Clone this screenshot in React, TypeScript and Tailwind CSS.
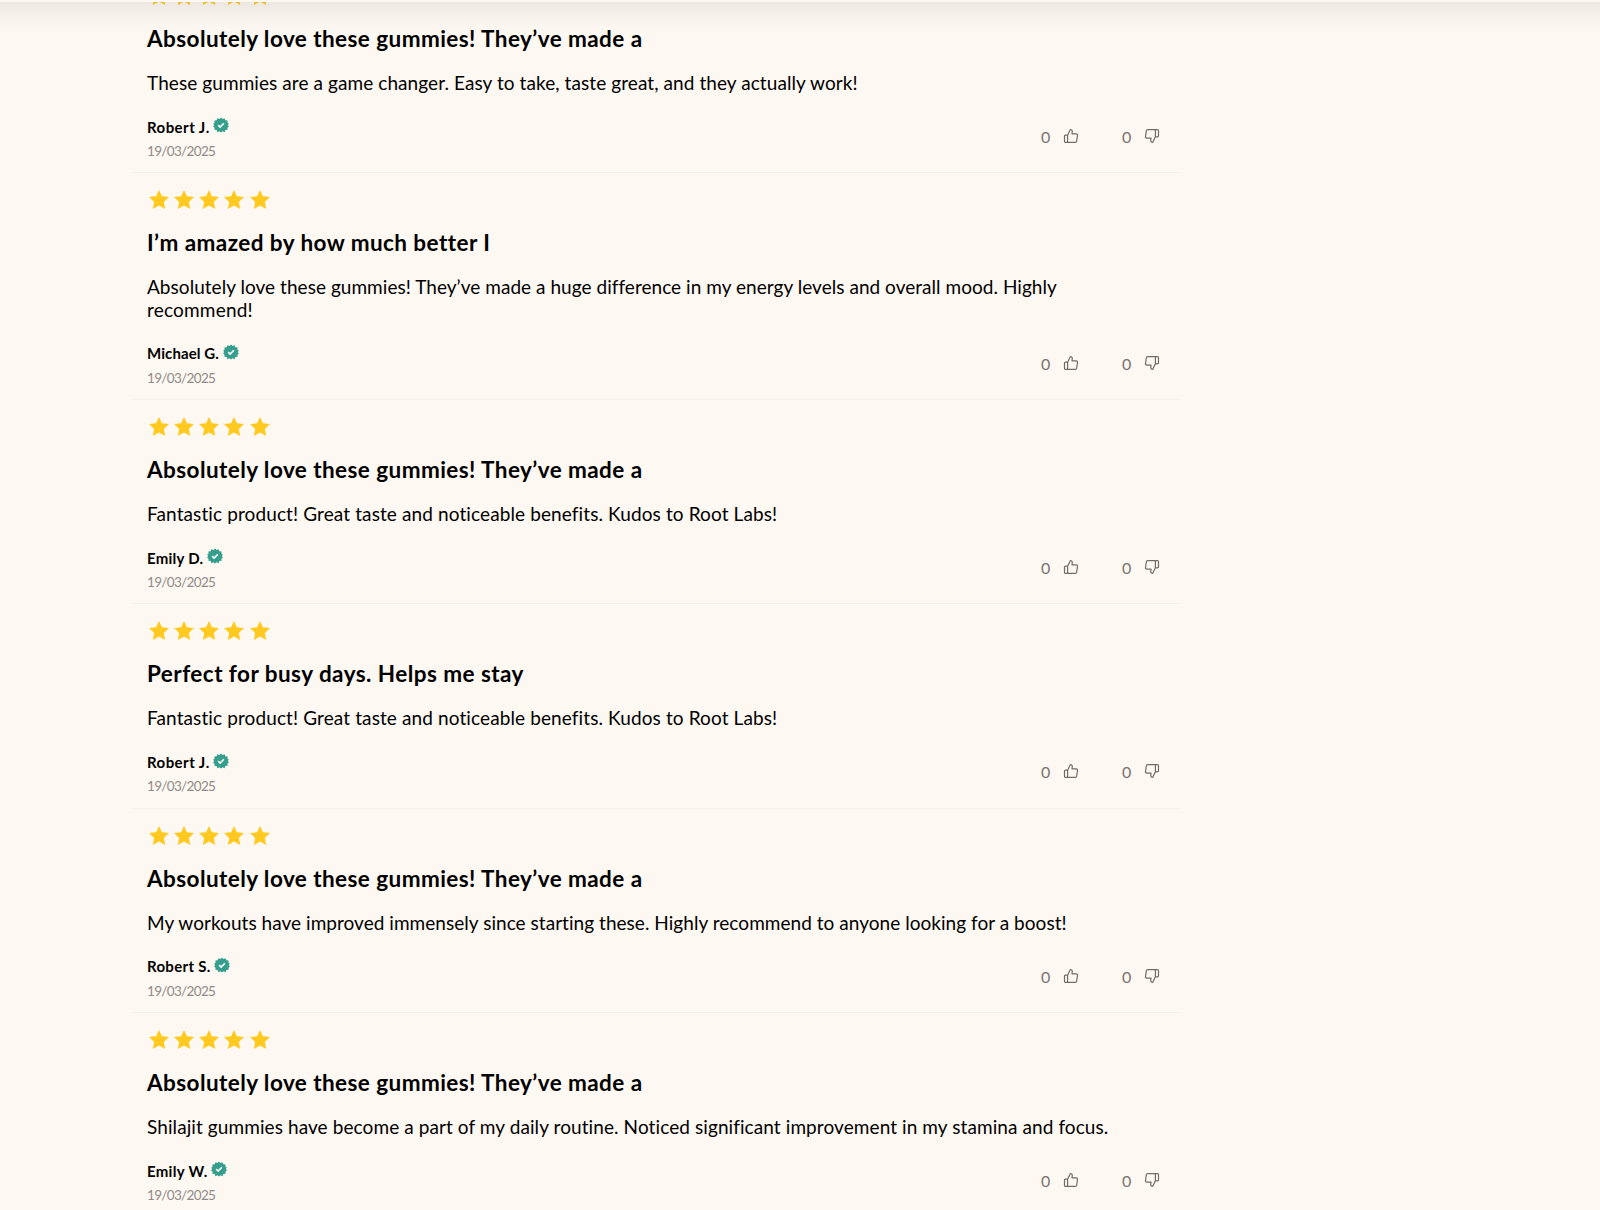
import React from "react";

interface Review {
  title: string;
  titleStyle: string;
  lines: { text: string; style: string }[];
  author: string;
  authorStyle: string;
  date: string;
}

const loveTitle = "Absolutely love these gummies! They’ve made a";
const kudos = "Fantastic product! Great taste and noticeable benefits. Kudos to Root Labs!";

const reviews: Review[] = [
  {
    title: loveTitle,
    titleStyle: "tracking-[0.43px]",
    lines: [{ text: "These gummies are a game changer. Easy to take, taste great, and they actually work!", style: "tracking-[0.08px]" }],
    author: "Robert J.",
    authorStyle: "tracking-[0.45px]",
    date: "19/03/2025",
  },
  {
    title: "I’m amazed by how much better I",
    titleStyle: "tracking-[0.44px]",
    lines: [
      { text: "Absolutely love these gummies! They’ve made a huge difference in my energy levels and overall mood. Highly", style: "tracking-[0.04px]" },
      { text: "recommend!", style: "tracking-[0.2px]" },
    ],
    author: "Michael G.",
    authorStyle: "tracking-[0.1px]",
    date: "19/03/2025",
  },
  {
    title: loveTitle,
    titleStyle: "tracking-[0.43px]",
    lines: [{ text: kudos, style: "tracking-[0.11px]" }],
    author: "Emily D.",
    authorStyle: "tracking-[0.25px]",
    date: "19/03/2025",
  },
  {
    title: "Perfect for busy days. Helps me stay",
    titleStyle: "tracking-[0.45px]",
    lines: [{ text: kudos, style: "tracking-[0.11px]" }],
    author: "Robert J.",
    authorStyle: "tracking-[0.45px]",
    date: "19/03/2025",
  },
  {
    title: loveTitle,
    titleStyle: "tracking-[0.43px]",
    lines: [{ text: "My workouts have improved immensely since starting these. Highly recommend to anyone looking for a boost!", style: "tracking-[0.04px]" }],
    author: "Robert S.",
    authorStyle: "tracking-[0.3px]",
    date: "19/03/2025",
  },
  {
    title: loveTitle,
    titleStyle: "tracking-[0.43px]",
    lines: [{ text: "Shilajit gummies have become a part of my daily routine. Noticed significant improvement in my stamina and focus.", style: "tracking-[0.09px]" }],
    author: "Emily W.",
    authorStyle: "tracking-[0.3px]",
    date: "19/03/2025",
  },
];

function Star() {
  return (
    <svg viewBox="0 0 20 19" className="h-[19px] w-5 fill-[#ffc91f]">
      <path d="M10 0l2.9 6.3 7.1.8-5.2 4.9 1.4 7L10 15.6 3.8 19l1.4-7L0 7.1l7.1-.8z" />
    </svg>
  );
}

function VerifiedBadge() {
  return (
    <svg viewBox="0 0 24 24" className="mb-[3px] h-[16px] w-[16px]">
      <path
        fill="#359e8c"
        d="M12 .6l2.300 2.500 3.100-1.400 1.100 3.200 3.400.2-.2 3.400 2.200 1.600-1.700 1.900 1.700 2.200-2.200 2 .2 3.100-3.400.300-1.100 3.100-3.100-1.300L12 23.400l-2.300-2-3.100 1.300-1.100-3.100-3.400-.300.2-3.100-2.200-2 1.700-2.200L.1 10.100l2.200-1.600-.2-3.400 3.400-.2 1.100-3.200 3.100 1.400z"
      />
      <path fill="none" stroke="#fff" strokeWidth="2.4" d="M7.800 12.200l2.900 2.900 5.600-5.800" />
    </svg>
  );
}

function Thumb({ down = false }: { down?: boolean }) {
  return (
    <svg
      viewBox="0 0 16 16"
      className={`h-4 w-4 ${down ? "rotate-180" : ""}`}
      fill="none"
      stroke="#6f6c69"
      strokeWidth="1.2"
      strokeLinejoin="round"
    >
      <path d="M4.6 7.2L7 2.3c.3-.9 2.3-.8 2.3 1.1L9 5.8h4.2c1 0 1.5.7 1.3 1.6l-.8 5.6c-.1.9-.7 1.4-1.5 1.4H2.6c-.7 0-1.1-.5-1.1-1.1V8.3c0-.7.4-1.1 1.1-1.1zM4.6 7.2v7.2" />
    </svg>
  );
}

function ReviewRow({ review }: { review: Review }) {
  return (
    <article className="border-b border-[#f4f0eb] px-[14px] pt-[17px] pb-[11.4px]">
      <div className="flex h-5 gap-[5.3px] pl-[1.5px]">
        {[0, 1, 2, 3, 4].map((i) => (
          <Star key={i} />
        ))}
      </div>
      <h3 className="mt-[18px] text-[22.5px] leading-[30px] font-bold whitespace-nowrap">
        <span className={review.titleStyle}>{review.title}</span>
      </h3>
      <div className="mt-[18px] text-[19px] leading-[22.4px] whitespace-nowrap">
        {review.lines.map((line) => (
          <p key={line.text}>
            <span className={line.style}>{line.text}</span>
          </p>
        ))}
      </div>
      <div className="mt-[20.5px] flex items-start justify-between">
        <div>
          <div className="flex h-6 items-center gap-[3.5px] text-[15px] font-bold">
            <span className={review.authorStyle}>{review.author}</span>
            <VerifiedBadge />
          </div>
          <div className="h-[22px] text-[13.5px] leading-[24px] tracking-[-0.66px] text-[#8f8b88]">{review.date}</div>
        </div>
        <div className="mt-[9px] mr-[5px] flex h-6 items-center text-[16px] text-[#777471]">
          <span className="w-[22px] pt-[2px]">0</span>
          <Thumb />
          <span className="ml-[43px] w-[22px] pt-[2px]">0</span>
          <Thumb down />
        </div>
      </div>
    </article>
  );
}

export default function App() {
  return (
    <div className="relative h-[1210px] w-full overflow-hidden bg-[#fef8f2] font-['Lato',sans-serif] text-black [font-variant-ligatures:none]">
      {/* bottom edge of the sticky header */}
      <div className="absolute -inset-x-10 -top-[78px] z-10 h-20 bg-[#fef8f2] shadow-[0_5px_30px_rgba(0,0,0,0.11)]" />
      <main className="-mt-[31px] ml-[133px] w-[1046px]">
        {reviews.map((review, i) => (
          <ReviewRow key={i} review={review} />
        ))}
      </main>
    </div>
  );
}
